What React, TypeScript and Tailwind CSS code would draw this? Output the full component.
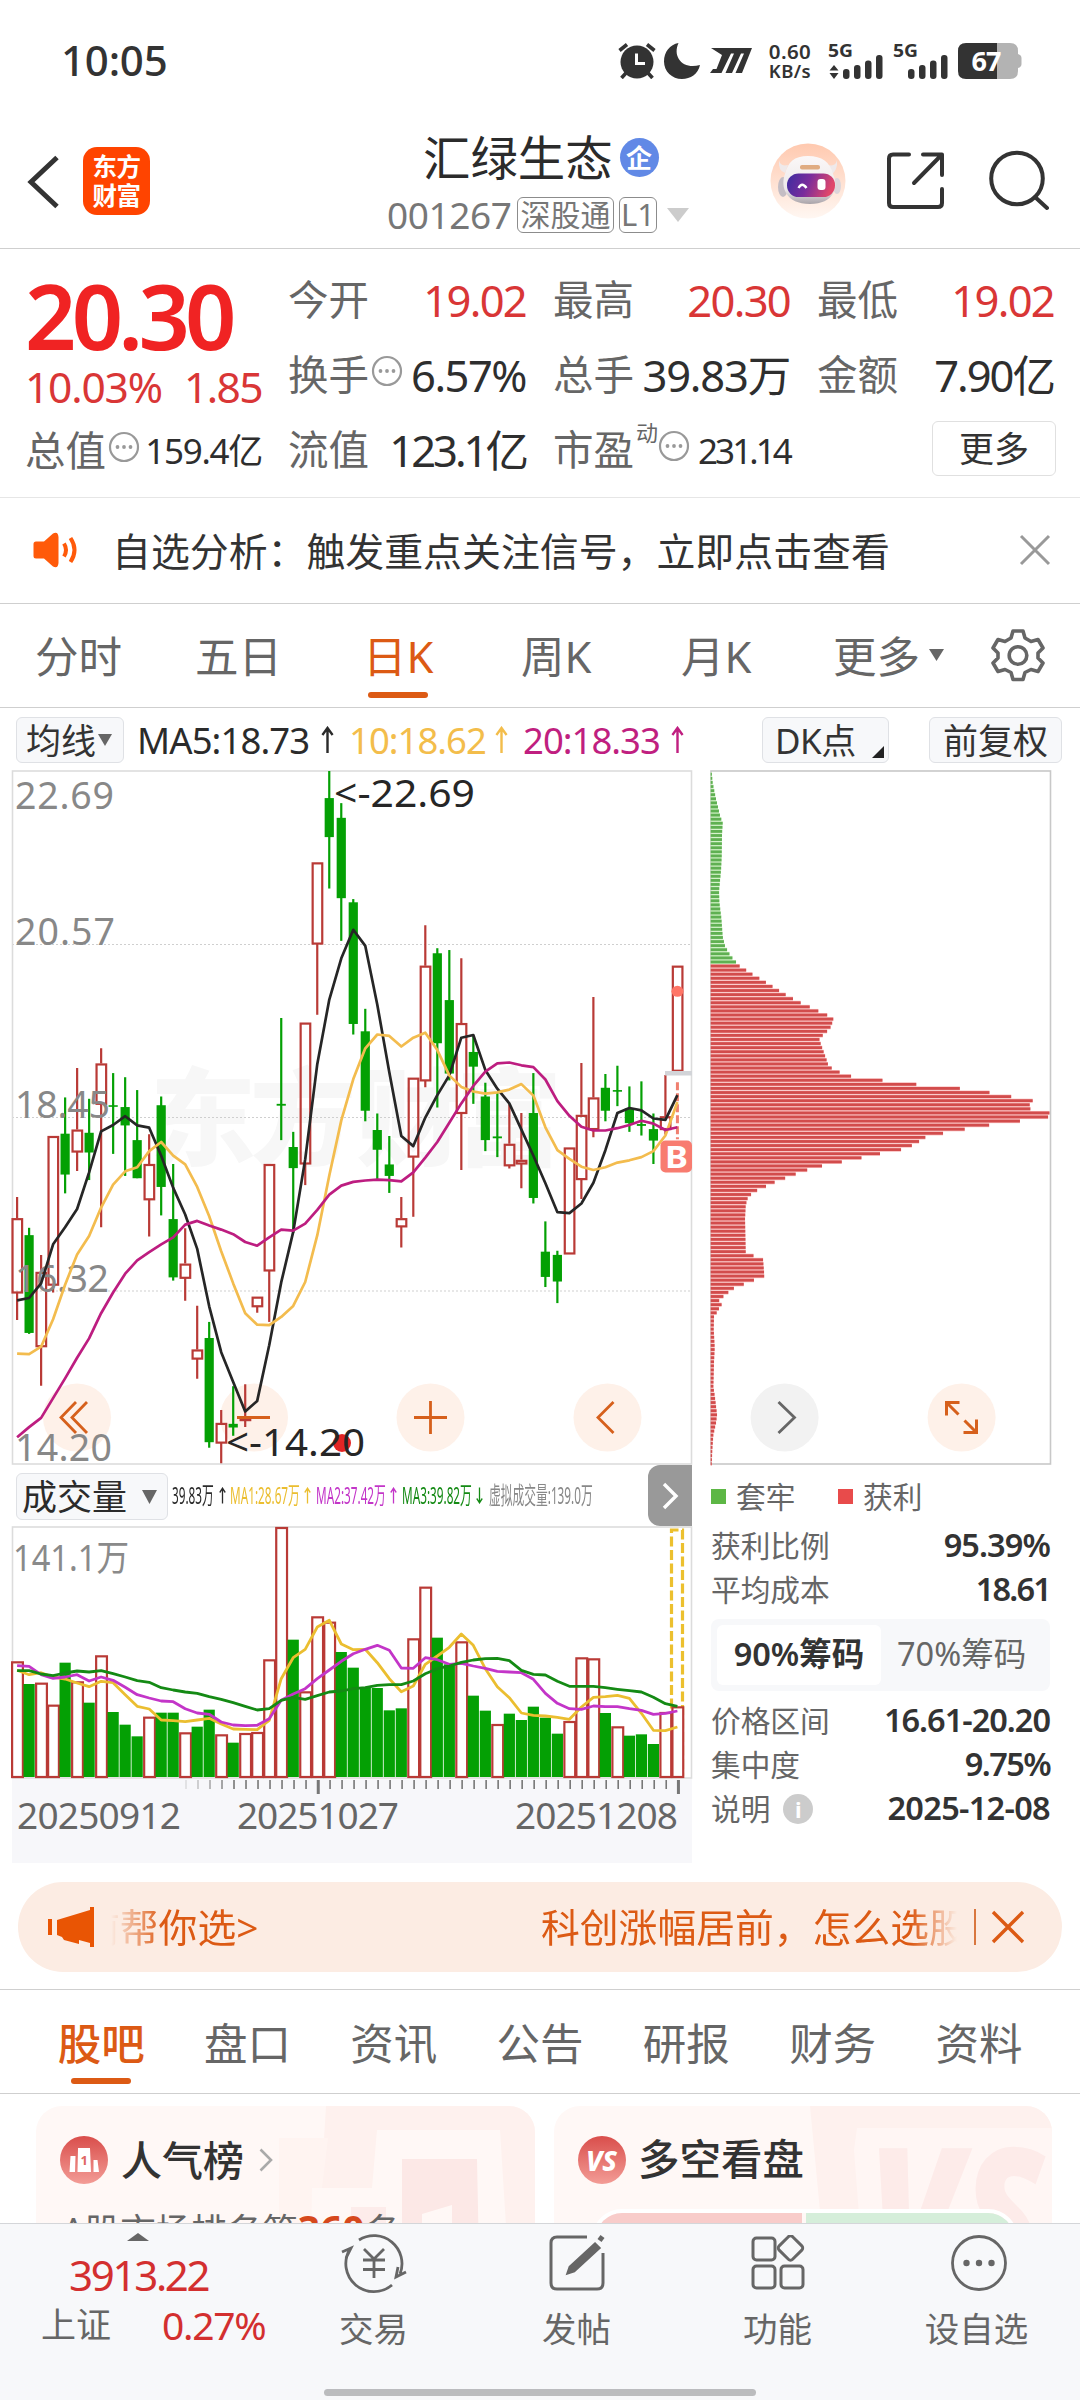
import React from "react";

/* ------------------------------------------------------------------ */
/* Chart data (vertical values are in plot units, see yPrice / yVol)   */
/* ------------------------------------------------------------------ */

type Candle = [kind: "r" | "g", top: number, bottom: number, high: number, low: number];

const candles: Candle[] = [
  ["r", 998, 1161, 952, 1220], ["g", 1035, 1248, 1019, 1250], ["r", 1115, 1278, 1078, 1363], ["r", 819, 1144, 819, 1160],
  ["g", 814, 903, 735, 944], ["r", 805, 854, 671, 895], ["g", 812, 855, 738, 915], ["r", 661, 750, 628, 1018],
  ["g", 752, 755, 682, 858], ["g", 756, 796, 691, 906], ["g", 828, 911, 719, 911], ["r", 880, 958, 815, 1038],
  ["g", 752, 930, 733, 992], ["g", 1000, 1127, 880, 1134], ["r", 1097, 1129, 1020, 1178], ["r", 1284, 1305, 1189, 1348],
  ["g", 1259, 1486, 1224, 1498], ["r", 1444, 1488, 1416, 1532], ["g", 1446, 1454, 1364, 1472], ["r", 1434, 1439, 1360, 1453],
  ["r", 1169, 1191, 1169, 1204], ["r", 880, 1113, 880, 1224], ["g", 749, 753, 562, 828], ["g", 843, 889, 810, 1030],
  ["r", 572, 880, 572, 926], ["r", 223, 401, 223, 555], ["g", 83, 168, 24, 280], ["g", 126, 301, 94, 394],
  ["g", 310, 575, 303, 598], ["g", 591, 764, 542, 787], ["g", 806, 849, 770, 913], ["g", 881, 906, 819, 943],
  ["r", 998, 1017, 952, 1062], ["r", 692, 865, 692, 995], ["r", 448, 699, 360, 713], ["g", 421, 617, 410, 757],
  ["g", 523, 683, 414, 698], ["r", 573, 770, 432, 893], ["g", 636, 668, 602, 749], ["g", 733, 828, 703, 852],
  ["g", 820, 824, 725, 865], ["r", 836, 884, 750, 890], ["r", 871, 880, 769, 933], ["g", 769, 954, 682, 966],
  ["g", 1071, 1126, 1005, 1148], ["g", 1078, 1136, 1069, 1183], ["r", 844, 1076, 844, 1076], ["r", 773, 914, 660, 956],
  ["r", 735, 805, 516, 822], ["g", 714, 764, 684, 787], ["g", 719, 722, 666, 754], ["g", 759, 791, 711, 810],
  ["g", 793, 797, 700, 818], ["g", 804, 829, 770, 880], ["r", 776, 805, 686, 816], ["r", 448, 678, 448, 678],
];

const ma5 = [1177, 1172, 1140, 1055, 1018, 978, 898, 809, 795, 776, 796, 801, 862, 932, 990, 1065, 1190, 1290, 1355, 1419, 1396, 1275, 1138, 1028, 870, 662, 522, 432, 370, 405, 533, 680, 819, 841, 779, 730, 687, 605, 599, 675, 716, 748, 805, 862, 922, 985, 987, 966, 921, 850, 769, 758, 763, 781, 784, 730];
const ma10 = [1293, 1294, 1278, 1218, 1143, 1077, 1037, 975, 925, 896, 887, 852, 832, 862, 881, 930, 994, 1070, 1140, 1205, 1230, 1231, 1213, 1189, 1137, 1035, 905, 785, 695, 628, 598, 601, 624, 605, 594, 632, 687, 712, 722, 727, 724, 718, 706, 731, 800, 850, 869, 886, 893, 887, 877, 872, 865, 852, 818, 745];
const ma20 = [1475, 1453, 1433, 1390, 1347, 1302, 1260, 1205, 1160, 1119, 1090, 1072, 1055, 1040, 1012, 1004, 1014, 1023, 1033, 1050, 1058, 1040, 1023, 1025, 1010, 980, 947, 927, 919, 916, 914, 915, 918, 898, 866, 832, 790, 748, 710, 679, 661, 659, 665, 669, 696, 743, 775, 799, 807, 807, 802, 795, 786, 792, 806, 800];

const volumes: ["r" | "g", number][] = [
  ["r", 608], ["g", 676], ["r", 672], ["r", 738], ["g", 612], ["r", 668], ["g", 732], ["r", 590], ["g", 760], ["g", 798],
  ["g", 833], ["r", 774], ["g", 762], ["g", 762], ["r", 821], ["g", 804], ["g", 753], ["r", 827], ["g", 852], ["r", 823],
  ["r", 820], ["r", 602], ["r", 205], ["g", 543], ["r", 698], ["r", 473], ["r", 489], ["g", 580], ["g", 627], ["g", 686],
  ["g", 688], ["g", 755], ["g", 749], ["r", 539], ["r", 384], ["g", 537], ["g", 617], ["r", 548], ["g", 711], ["g", 756],
  ["r", 796], ["g", 765], ["g", 784], ["g", 744], ["g", 777], ["g", 825], ["r", 787], ["r", 596], ["r", 599], ["g", 763],
  ["r", 803], ["g", 831], ["g", 827], ["g", 856], ["r", 760], ["r", 743],
];
const vma1 = [635, 648, 642, 655, 661, 673, 684, 668, 672, 708, 743, 751, 784, 786, 789, 784, 779, 796, 811, 812, 813, 785, 660, 597, 572, 505, 485, 556, 573, 572, 612, 660, 699, 682, 617, 592, 566, 526, 560, 630, 684, 717, 763, 770, 772, 776, 782, 745, 716, 714, 710, 719, 764, 815, 816, 805];
const vma2 = [621, 623, 648, 659, 655, 648, 667, 655, 665, 686, 708, 718, 727, 729, 750, 763, 767, 790, 799, 801, 800, 780, 725, 706, 690, 660, 634, 608, 585, 572, 560, 575, 628, 629, 597, 603, 617, 614, 622, 629, 638, 640, 642, 662, 704, 734, 750, 752, 742, 744, 744, 750, 755, 767, 764, 757];
const vma3 = [636, 636, 646, 651, 643, 637, 640, 636, 645, 655, 666, 671, 687, 694, 700, 704, 714, 722, 732, 743, 754, 750, 725, 716, 722, 711, 700, 697, 690, 687, 680, 678, 678, 667, 645, 630, 622, 611, 604, 600, 599, 606, 635, 647, 649, 668, 683, 683, 683, 687, 692, 696, 700, 716, 735, 743];

/* Cost distribution outline: [vertical unit, bar end] */
const chips: [number, number][] = [
  [28, 65], [50, 68], [68, 73], [85, 78], [103, 84], [121, 90], [138, 98], [160, 96], [210, 95], [240, 93], [285, 87],
  [310, 88], [345, 94], [385, 98], [405, 105], [420, 116], [431, 127], [440, 138], [449, 149], [458, 169], [467, 188],
  [476, 209], [485, 229], [494, 249], [503, 269], [512, 289], [520, 309], [530, 335], [538, 360], [547, 386], [556, 413],
  [565, 431], [574, 426], [583, 421], [592, 410], [600, 398], [609, 388], [618, 392], [636, 401], [654, 410], [663, 414],
  [671, 425], [680, 449], [689, 484], [698, 581], [707, 684], [716, 818], [724, 896], [733, 962], [742, 1028], [751, 1019],
  [760, 1021], [769, 1080], [777, 1080], [786, 995], [796, 891], [804, 826], [813, 760], [822, 706], [831, 687], [840, 665],
  [849, 632], [858, 567], [867, 511], [876, 451], [885, 391], [893, 352], [902, 317], [911, 285], [920, 253], [929, 227],
  [938, 200], [947, 182], [956, 172], [970, 167], [1000, 165], [1071, 167], [1080, 191], [1088, 219], [1124, 223],
  [1133, 192], [1142, 161], [1151, 131], [1159, 116], [1168, 101], [1177, 87], [1186, 95], [1195, 87], [1204, 80],
  [1212, 72], [1240, 71], [1280, 74], [1310, 72], [1365, 70], [1390, 75], [1408, 78], [1426, 81], [1444, 78], [1470, 70],
  [1500, 67], [1535, 65],
];

const xAt = (i: number) => 17.1 + 12.006 * i;
const yPrice = (v: number) => 1 + (v - 24) * 0.4591;
const yVol = (v: number) => (v - 205) / 3 + 1;

const line = (values: number[], y: (v: number) => number) =>
  values.map((v, i) => `${xAt(i).toFixed(1)},${y(v).toFixed(1)}`).join(" ");

const chipEnd = (v: number) => {
  for (let i = 1; i < chips.length; i++) {
    const [y1, x1] = chips[i];
    if (v <= y1) {
      const [y0, x0] = chips[i - 1];
      return x0 + ((x1 - x0) * (v - y0)) / (y1 - y0);
    }
  }
  return 65;
};

/* ------------------------------------------------------------------ */
/* Small pieces                                                        */
/* ------------------------------------------------------------------ */

function Dots({ className = "" }: { className?: string }) {
  return (
    <svg viewBox="0 0 32 32" className={`h-8 w-8 shrink-0 ${className}`}>
      <circle cx="16" cy="16" r="14" fill="none" stroke="#999" strokeWidth="2.200" />
      <circle cx="9.5" cy="16" r="1.9" fill="#999" />
      <circle cx="16" cy="16" r="1.9" fill="#999" />
      <circle cx="22.5" cy="16" r="1.9" fill="#999" />
    </svg>
  );
}

function Squeezed({ box, color, children }: { box: string; color: string; children: React.ReactNode }) {
  return (
    <span className={`block shrink-0 ${box}`}>
      <span className={`block w-max origin-left scale-x-[0.5] text-[23.5px] leading-none ${color}`}>{children}</span>
    </span>
  );
}

function Arrow({ className, down = false }: { className: string; down?: boolean }) {
  return (
    <svg viewBox="0 0 14 28" preserveAspectRatio="none" className={`shrink-0 ${className}`} fill="none" stroke="currentColor" strokeWidth="2.6">
      <path d={down ? "M7 1V26M1.5 19L7 26L12.5 19" : "M7 27V2M1.5 9L7 2L12.5 9"} />
    </svg>
  );
}

function Signal({ data = false }: { data?: boolean }) {
  return (
    <svg viewBox="0 0 54 36" className="h-9 w-[54px] overflow-visible" fill="#333">
      <text x="-1" y="13.5" fontSize="18.5" fontWeight="700" textLength="25" lengthAdjust="spacingAndGlyphs">5G</text>
      {data && <path d="M5 22l4.5 5.5h-9zM5 36l4.5-6h-9z" />}
      <rect x="14" y="26" width="6.5" height="10" rx="3" />
      <rect x="25" y="22" width="6.5" height="14" rx="3" />
      <rect x="36" y="17.5" width="6.5" height="18.5" rx="3" />
      <rect x="47" y="12" width="6.5" height="24" rx="3" />
    </svg>
  );
}

/* ------------------------------------------------------------------ */
/* Sections                                                            */
/* ------------------------------------------------------------------ */

function StatusBar() {
  return (
    <div className="flex h-[122px] items-center pl-[61px]">
      <div className="mt-[-2px] w-[557px] text-[42px] leading-none font-medium tracking-[-0.2px] text-[#333]">10:05</div>
      <svg viewBox="0 0 38 37" className="h-[37px] w-[38px]">
        <circle cx="19" cy="20" r="16.5" fill="#333" />
        <path d="M1.5 8.5L9 2.5M36.500 8.500L29 2.500M8 31L3.500 36M30 31L34.500 36" stroke="#333" strokeWidth="3.6" />
        <path d="M18.500 11.500V21.500H27" fill="none" stroke="#fff" strokeWidth="3" />
      </svg>
      <svg viewBox="0 0 36 36" className="ml-2 h-9 w-9">
        <path d="M14.500 0C8 14 19 27 36 22C34 31 26.500 36 18 36C8 36 0 28.500 0 18.500C0 9 6 1.500 14.500 0Z" fill="#333" />
      </svg>
      <svg viewBox="0 0 42 25" className="ml-[10px] h-[25px] w-[42px]">
        <path d="M1 0H42L32 25H25.500L34 5.500H31L22 25H15.500L24 5.500H21L11.500 25H0L3 21H6.500L12 7Z" fill="#333" />
      </svg>
      <div className="ml-[15px] flex w-[46px] flex-col items-center text-[20.5px] leading-[20px] font-semibold tracking-[0.4px] text-[#333]">
        <span>0.60</span>
        <span className="text-[18.5px]">KB/s</span>
      </div>
      <div className="ml-4"><Signal data /></div>
      <div className="ml-[11px]"><Signal /></div>
      <svg viewBox="0 0 64 36" className="ml-2.5 h-9 w-16">
        <path d="M39 0H52Q60 0 60 8V11Q63.500 12 63.500 15V21Q63.500 24 60 25V28Q60 36 52 36H39Z" fill="#b3b3b3" />
        <path d="M8 0H39V36H8Q0 36 0 28V8Q0 0 8 0Z" fill="#333" />
        <text x="13.500" y="27.500" fontSize="27" fontWeight="700" fill="#fff" textLength="30">67</text>
      </svg>
    </div>
  );
}

function Robot() {
  return (
    <svg viewBox="0 0 76 76" className="h-[76px] w-[76px]">
      <defs>
        <linearGradient id="halo" x1="0" y1="0" x2="0" y2="1">
          <stop offset="0" stopColor="#ffc9af" />
          <stop offset="1" stopColor="#fff7f2" />
        </linearGradient>
        <linearGradient id="visor" x1="0" y1="0" x2="1" y2="0.2">
          <stop offset="0" stopColor="#3c2ca0" />
          <stop offset="0.5" stopColor="#7a2c9c" />
          <stop offset="1" stopColor="#e0476b" />
        </linearGradient>
        <linearGradient id="shell" x1="0" y1="0" x2="0" y2="1">
          <stop offset="0" stopColor="#fbf8f8" />
          <stop offset="0.7" stopColor="#ece8ea" />
          <stop offset="1" stopColor="#a9a3a9" />
        </linearGradient>
      </defs>
      <circle cx="38" cy="38" r="37.500" fill="url(#halo)" />
      <path d="M9 17Q10 24 18 22L15 30Q8 28 9 17ZM67 17Q66 24 58 22L61 32Q68 27 67 17Z" fill="#efe9ea" />
      <ellipse cx="13" cy="44" rx="5" ry="10" fill="#c4bdc4" />
      <ellipse cx="67" cy="43" rx="4" ry="8" fill="#dcd5da" />
      <path d="M38 13C52 13 60 19 63 31C69 44 64 61 40 61C16 61 10 44 15 31C18 19 24 13 38 13Z" fill="url(#shell)" />
      <rect x="30" y="22" width="20" height="4.500" rx="2" fill="#e0ac82" />
      <rect x="17" y="30.500" width="48" height="23.500" rx="11.500" fill="url(#visor)" />
      <path d="M28.500 45Q32 38.500 36.500 45" fill="none" stroke="#fff" strokeWidth="2.400" />
      <rect x="47.500" y="36" width="8" height="11" rx="3" fill="#fff" />
    </svg>
  );
}

function Header() {
  return (
    <div className="flex h-[127px] border-b border-[#cfcfcf]">
      <svg viewBox="0 0 34 54" className="mt-[33px] ml-[27px] h-[54px] w-[34px]">
        <path d="M30 2.500L4 27L30 51.500" fill="none" stroke="#333" strokeWidth="5" />
      </svg>
      <div className="mt-[25px] ml-[22px] flex h-[68px] w-[67px] flex-col items-center justify-center rounded-[14px] bg-[#ff4400] text-[24.5px] leading-[29px] font-bold tracking-[-0.5px] text-white">
        <span>东方</span>
        <span>财富</span>
      </div>
      <div className="ml-[235px] flex w-[310px] flex-col">
        <div className="mt-2 flex h-[56px] items-center pl-[38px]">
          <span className="text-[47.4px] leading-none text-[#2b2b2b]">汇绿生态</span>
          <span className="ml-[7px] flex h-[39px] w-[39px] items-center justify-center rounded-full bg-[#6189e6] text-[26px] leading-none font-bold text-white">企</span>
        </div>
        <div className="mt-[10px] flex h-[38px] items-center text-[#777]">
          <span className="w-[132px] pl-0.5 text-[37px] leading-none tracking-[-0.4px]">001267</span>
          <span className="flex h-9 w-[97px] items-center justify-center rounded-md border-[1.5px] border-[#8c8c8c] text-[30px] leading-none">深股通</span>
          <span className="ml-[5px] flex h-9 w-[38px] items-center justify-center rounded-md border-[1.5px] border-[#8c8c8c] text-[31px] leading-none">L1</span>
          <svg viewBox="0 0 22 14" className="ml-2.5 h-[14px] w-[22px]"><path d="M0 0H22L11 14Z" fill="#ccc" /></svg>
        </div>
      </div>
      <div className="mt-[21px] ml-[75px]"><Robot /></div>
      <svg viewBox="0 0 60 60" className="mt-[29px] ml-10 h-[60px] w-[60px]" fill="none" stroke="#333" strokeWidth="4">
        <path d="M23 3.500H7Q3 3.500 3 7.500V52Q3 56 7 56H52Q56 56 56 52V38M37 3.500H56V24M55 4.500L28 32" strokeLinecap="round" strokeLinejoin="round" />
      </svg>
      <svg viewBox="0 0 60 62" className="mt-[28px] ml-[43px] h-[62px] w-[60px]" fill="none" stroke="#333" strokeWidth="4" strokeLinecap="round">
        <circle cx="28" cy="28.500" r="25.800" />
        <path d="M46 47L58 58" />
      </svg>
    </div>
  );
}

function Quote() {
  const label = "text-[40.5px] leading-none text-[#666] shrink-0";
  const red = "text-[43.5px] leading-none tracking-[-1.7px] text-[#d93636]";
  const dark = "text-[43.5px] leading-none text-[#2e2e2e]";
  const small = "text-[35px] leading-none text-[#2e2e2e]";
  const col = "flex items-center justify-between";
  return (
    <div className="flex h-[249px] border-b border-[#e6e6e6] pl-[25px]">
      <div className="w-[237px]">
        <div className="mt-[18px] flex h-[96px] items-center text-[90px] leading-none font-semibold tracking-[-4.8px] text-[#f02323]">20.30</div>
        <div className="mt-px flex h-[46px] items-center justify-between text-[42.5px] leading-none text-[#d93636]">
          <span className="tracking-[-1.2px]">10.03%</span>
          <span className="tracking-[-1.6px]">1.85</span>
        </div>
        <div className="mt-[16px] flex h-[50px] items-center">
          <span className={label}>总值</span>
          <Dots className="mb-2 ml-[2px]" />
          <span className={`${small} ml-auto tracking-[-1.3px]`}>159.4亿</span>
        </div>
      </div>
      <div className="mt-[14px] ml-[26px] grid w-[766px] auto-rows-[75px] grid-cols-[238px_237px_237px] gap-x-[27px]">
        <div className={col}><span className={label}>今开</span><span className={red}>19.02</span></div>
        <div className={col}><span className={label}>最高</span><span className={`${red} tracking-[-0.4px]`}>20.30</span></div>
        <div className={col}><span className={label}>最低</span><span className={red}>19.02</span></div>
        <div className={col}>
          <span className={label}>换手</span><Dots className="mb-2 ml-[2px]" /><span className={`${dark} ml-auto tracking-[-1.5px]`}>6.57%</span>
        </div>
        <div className={col}><span className={label}>总手</span><span className={`${dark} tracking-[-1.2px]`}>39.83万</span></div>
        <div className={col}><span className={label}>金额</span><span className={`${dark} tracking-[-2px]`}>7.90亿</span></div>
        <div className={col}><span className={label}>流值</span><span className={`${dark} tracking-[-3px]`}>123.1亿</span></div>
        <div className={col}>
          <span className={label}>市盈</span>
          <span className="mb-9 ml-0.5 text-[22px] leading-none text-[#666]">动</span>
          <Dots className="mb-2" />
          <span className={`${small} ml-auto tracking-[-2.9px]`}>231.14</span>
        </div>
        <div className="flex items-center justify-end">
          <span className="mr-[-2px] mb-1 flex h-[55px] w-[124px] items-center justify-center rounded-md border-[1.5px] border-[#e0e0e0] text-[35px] leading-none text-[#333]">更多</span>
        </div>
      </div>
    </div>
  );
}

function Alert() {
  return (
    <div className="flex h-[106px] items-center border-b border-[#cfcfcf] pl-[33px]">
      <svg viewBox="0 0 46 36" className="h-9 w-[46px]">
        <path d="M3 9.500H11L20 1.500Q25 -1 25.500 5V31Q25 37 20 34.500L11 26.500H3Q0.500 26.500 0.500 24V12Q0.500 9.500 3 9.500Z" fill="#ff5a0a" />
        <path d="M31 11.500Q35 18 31 24.500M37.500 6Q45.500 18 37.500 30" fill="none" stroke="#ff5a0a" strokeWidth="4" />
      </svg>
      <span className="mt-0.5 ml-[33px] w-[907px] text-[38.9px] leading-none text-[#333]">自选分析：触发重点关注信号，立即点击查看</span>
      <svg viewBox="0 0 32 32" className="h-8 w-8" stroke="#999" strokeWidth="3"><path d="M2 2L30 30M30 2L2 30" /></svg>
    </div>
  );
}

function PeriodTabs() {
  return (
    <div className="flex h-[104px] items-center border-b border-[#cfcfcf] pt-1 text-[43.5px] leading-none text-[#666]">
      <span className="ml-[35px] w-[160px]">分时</span>
      <span className="w-[168px]">五日</span>
      <span className="relative w-[158px] text-[#dc5a14]">
        日K
        <i className="absolute top-[57px] left-[5px] h-1.5 w-[60px] rounded-full bg-[#dc5a14]" />
      </span>
      <span className="w-[160px]">周K</span>
      <span className="w-[152px]">月K</span>
      <span>更多</span>
      <svg viewBox="0 0 15 12" className="mb-1 ml-[9px] h-3 w-[15px]"><path d="M0 0H15L7.500 12Z" fill="#666" /></svg>
      <svg viewBox="0 0 54 54" className="mb-1 ml-[47px] h-[54px] w-[54px]" fill="none" stroke="#666" strokeWidth="3.600" strokeLinejoin="round">
        <path d="M22 3H32L34 10L40 13.500L47 11.500L52 20L47 25V30L52 35L47 43.500L40 41.500L34 44.500L32 51.500H22L20 44.500L14 41.500L7 43.500L2 35L7 30V25L2 20L7 11.500L14 13.500L20 10Z" />
        <circle cx="27" cy="27.500" r="8.800" />
      </svg>
    </div>
  );
}

function MaRow() {
  const btn = "flex h-[46px] items-center rounded-md border-[1.5px] border-[#dfe1e5] bg-[#f7f8fa] text-[35px] leading-none text-[#333]";
  return (
    <div className="flex h-[63px] items-center pt-0.5 text-[36.5px] leading-none">
      <div className={`${btn} ml-4 w-[108px] pl-[9px]`}>
        均线
        <svg viewBox="0 0 14 12" className="ml-0.5 h-3 w-[14px]"><path d="M0 0H14L7 12Z" fill="#666" /></svg>
      </div>
      <span className="ml-[13px] w-[184px] tracking-[-0.9px] text-[#2b2b2b]">MA5:18.73</span>
      <Arrow className="h-7 w-[13px] text-[#2b2b2b]" />
      <span className="ml-[15px] w-[146px] tracking-[-1px] text-[#f3bd4b]">10:18.62</span>
      <Arrow className="h-7 w-[13px] text-[#f3bd4b]" />
      <span className="ml-[15px] w-[148px] tracking-[-1px] text-[#c01f80]">20:18.33</span>
      <Arrow className="h-7 w-[13px] text-[#c01f80]" />
      <div className={`${btn} relative ml-[78px] w-[127px] pl-[12px] tracking-[-0.5px]`}>
        DK点
        <svg viewBox="0 0 12 12" className="absolute right-1 bottom-1 h-3 w-3"><path d="M12 0V12H0Z" fill="#222" /></svg>
      </div>
      <div className={`${btn} ml-[40px] w-[133px] justify-center`}>前复权</div>
    </div>
  );
}

function PriceChart() {
  const red = "#b93a36";
  const green = "#04a004";
  const last = candles.length - 1;
  return (
    <svg viewBox="0 0 700 696" className="h-[696px] w-[700px] shrink-0">
      <g fill="#f7f7f7" fontSize="106" fontWeight="900">
        <text x="150" y="387">东</text>
        <text x="250" y="387">方</text>
        <text x="356" y="387">财</text>
        <text x="456" y="387">富</text>
      </g>
      <path d="M12 174.500H692M12 347.500H692M12 521H692" stroke="#cfcfcf" strokeWidth="1" strokeDasharray="2 2" />
      <rect x="12.500" y="1" width="679" height="693" fill="none" stroke="#dcdcdc" strokeWidth="1.600" />
      <g fill="#fef1e9">
        <circle cx="77" cy="647.500" r="34" />
        <circle cx="254" cy="647.500" r="34" />
        <circle cx="430.500" cy="647.500" r="34" />
        <circle cx="607.500" cy="647.500" r="34" />
      </g>
      {candles.map(([kind, top, bottom, high, low], i) => {
        const x = xAt(i);
        const t = yPrice(top);
        const b = yPrice(bottom);
        if (kind === "g") {
          return (
            <g key={i} fill={green}>
              <rect x={x - 1.1} y={yPrice(high)} width="2.200" height={yPrice(low) - yPrice(high)} />
              <rect x={x - 4.6} y={t} width="9.200" height={Math.max(1.6, b - t)} />
            </g>
          );
        }
        return (
          <g key={i} stroke={red} strokeWidth="2.200" fill="none">
            <path d={`M${x} ${yPrice(high)}V${t}M${x} ${b}V${yPrice(low)}`} />
            <rect x={x - 4.6} y={t + 1} width="9.600" height={Math.max(0.5, b - t - 1.5)} />
          </g>
        );
      })}
      <rect x="665" y="301" width="27" height="4.500" fill="#d2d4d8" />
      <ellipse cx={xAt(last)} cy={yPrice(504)} rx="6" ry="5.500" fill="#ff7566" />
      <path d={`M${xAt(last)} ${yPrice(702)}V${yPrice(826)}`} stroke="#f08070" strokeWidth="3" strokeDasharray="8 3" />
      <g fill="#888" fontSize="37.500">
        <text x="15" y="39" textLength="99">22.69</text>
        <text x="15" y="174.500" textLength="100">20.57</text>
        <text x="15" y="348" textLength="95">18.45</text>
        <text x="15" y="522" textLength="94">16.32</text>
        <text x="15" y="691" textLength="97">14.20</text>
      </g>
      <g fill="none" strokeWidth="2.700" strokeLinejoin="round">
        <polyline points={line(ma5, yPrice)} stroke="#262626" />
        <polyline points={line(ma10, yPrice)} stroke="#f3bc4e" />
        <polyline points={line(ma20, yPrice)} stroke="#bd1d80" />
      </g>
      <rect x="660.500" y="370.500" width="31.500" height="32" rx="5" fill="#f87c70" />
      <text x="665" y="397.500" fontSize="30" fontWeight="700" fill="#fff" textLength="23" lengthAdjust="spacingAndGlyphs">B</text>
      <ellipse cx="342" cy="673" rx="9" ry="9" fill="#e32525" />
      <g fill="#262626" fontSize="37.500">
        <text x="334" y="37" textLength="141" lengthAdjust="spacingAndGlyphs">&lt;-22.69</text>
        <text x="226" y="686" textLength="139" lengthAdjust="spacingAndGlyphs">&lt;-14.20</text>
      </g>
      <g fill="none" stroke="#d6601c" strokeWidth="2.800">
        <path d="M76 632L61 647.500L76 663M87 632L72 647.500L87 663" />
        <path d="M237 647.500H270" />
        <path d="M414 647.500H447M430.500 631V664" />
        <path d="M613.500 632L598 647.500L613.500 663" />
      </g>
    </svg>
  );
}

function ChipChart() {
  const rows = Array.from({ length: 170 }, (_, k) => 31.2 + 8.886 * k);
  return (
    <svg viewBox="700 0 380 696" className="h-[696px] w-[380px] shrink-0">
      <rect x="711" y="1" width="339.500" height="693" fill="#fff" stroke="#c8c8c8" strokeWidth="1.600" />
      {rows.map((v, k) => {
        const w = (chipEnd(v) - 62) / 3;
        const y = yPrice(v);
        return (
          <g key={k}>
            <rect x="710.700" y={y - 2} width={w} height="4.080" fill={k < 47 ? "#c9efbd" : "#f9bcbc"} />
            <rect x="710.700" y={y - 1.4} width={w} height="2.800" fill={k < 47 ? "#5fb052" : "#d24c4c"} />
          </g>
        );
      })}
      <circle cx="784.600" cy="647.500" r="34" fill="#f2f2f2" />
      <path d="M778.500 632L794.500 647.500L778.500 663" fill="none" stroke="#666" strokeWidth="2.800" />
      <circle cx="961.600" cy="647.500" r="34" fill="#fef1e9" />
      <path d="M959.500 632.500H946.500V645.500M946.500 632.500L958.500 644.500M963.500 662.500H976.500V649.500M976.500 662.500L964.500 650.500" fill="none" stroke="#d6601c" strokeWidth="3" />
    </svg>
  );
}

function VolumeChart() {
  const red = "#b93a36";
  const base = yVol(955);
  return (
    <svg viewBox="0 0 700 337" className="h-[337px] w-[700px]">
      <rect x="12" y="253" width="680" height="84" fill="#f7f7fa" />
      <rect x="12.500" y="1" width="679" height="251" fill="none" stroke="#dcdcdc" strokeWidth="1.600" />
      <text x="13" y="45" fontSize="36.500" fill="#8a8a8a" textLength="116" lengthAdjust="spacingAndGlyphs">141.1万</text>
      <path d="M671.500 250V4H682.500V250" fill="none" stroke="#ecc02e" strokeWidth="3.200" strokeDasharray="10 3.500" />
      {volumes.map(([kind, top], i) => {
        const x = xAt(i);
        const t = yVol(top);
        return kind === "g" ? (
          <rect key={i} x={x - 5.6} y={t} width="11.200" height={base - t} fill="#04a004" />
        ) : (
          <rect key={i} x={x - 5} y={t + 1} width="10.800" height={base - t - 1} fill="#fff" stroke={red} strokeWidth="2.200" />
        );
      })}
      <g fill="none" strokeWidth="2.800" strokeLinejoin="round">
        <polyline points={line(vma1, yVol)} stroke="#ebbe30" />
        <polyline points={line(vma2, yVol)} stroke="#c335c8" />
        <polyline points={line(vma3, yVol)} stroke="#148a14" />
      </g>
      {volumes.map((_, i) => {
        if (i < 14) return null;
        const major = i === 25 || i === volumes.length - 1;
        return (
          <rect
            key={i}
            x={xAt(i) - (major ? 0.5 : 0)}
            y="254"
            width={major ? 3 : 1.6}
            height={major ? 14 : 9}
            fill="#777"
            opacity={Math.min(1, 0.2 + (i - 14) * 0.2)}
          />
        );
      })}
      <g fill="#666" fontSize="37">
        <text x="17" y="303" textLength="164">20250912</text>
        <text x="237" y="303" textLength="162">20251027</text>
        <text x="515" y="303" textLength="163">20251208</text>
      </g>
    </svg>
  );
}

function VolumeHeader() {
  return (
    <div className="flex h-[60px] items-center pl-4">
      <div className="mt-0.5 flex h-[47px] w-[152px] items-center rounded-md border-[1.5px] border-[#dfe1e5] bg-[#f7f8fa] pl-[5px] text-[35px] leading-none text-[#2b2b2b]">
        成交量
        <svg viewBox="0 0 15 14" className="ml-[15px] h-[14px] w-[15px]"><path d="M0 0H15L7.500 14Z" fill="#666" /></svg>
      </div>
      <Squeezed box="ml-1 w-[47px]" color="text-[#2b2b2b]">39.83万</Squeezed>
      <Arrow className="h-[17px] w-[7px] text-[#2b2b2b]" />
      <Squeezed box="ml-[4px] w-[74px]" color="text-[#ebbe30]">MA1:28.67万</Squeezed>
      <Arrow className="h-[17px] w-[7px] text-[#ebbe30]" />
      <Squeezed box="ml-[5px] w-[74px]" color="text-[#c335c8]">MA2:37.42万</Squeezed>
      <Arrow className="h-[17px] w-[7px] text-[#c335c8]" />
      <Squeezed box="ml-[5px] w-[74px]" color="text-[#148a14]">MA3:39.82万</Squeezed>
      <Arrow down className="h-[17px] w-[7px] text-[#148a14]" />
      <Squeezed box="ml-[6px] w-[110px]" color="text-[#888]">虚拟成交量:139.0万</Squeezed>
      <div className="ml-auto flex h-[61px] w-[44px] items-center justify-center rounded-l-xl bg-[#999]">
        <svg viewBox="0 0 18 28" className="h-7 w-[18px]" fill="none" stroke="#fff" strokeWidth="3.400"><path d="M3 2L15 14L3 26" /></svg>
      </div>
    </div>
  );
}

function Stat({ name, value, spacing, info = false }: { name: string; value: string; spacing: string; info?: boolean }) {
  return (
    <div className="flex h-11 items-center justify-between text-[29.7px] leading-none">
      <span className="flex items-center text-[#666]">
        {name}
        {info && (
          <i className="ml-[13px] flex h-[30px] w-[30px] items-center justify-center rounded-full bg-[#ccc] text-[22px] leading-none font-bold text-white not-italic">i</i>
        )}
      </span>
      <span className={`text-[32.5px] font-semibold text-[#333] ${spacing}`}>{value}</span>
    </div>
  );
}

function ChipStats() {
  return (
    <div className="w-[339px]">
      <div className="flex h-[58px] items-center pt-1 text-[29.7px] leading-none text-[#666]">
        <i className="h-[15px] w-[15px] bg-[#5db745]" />
        <span className="ml-2.5 w-[102px]">套牢</span>
        <i className="h-[15px] w-[15px] bg-[#e84b4b]" />
        <span className="ml-2.5">获利</span>
      </div>
      <Stat name="获利比例" value="95.39%" spacing="tracking-[-0.9px]" />
      <Stat name="平均成本" value="18.61" spacing="tracking-[-1.8px]" />
      <div className="mt-[7px] mb-[8px] flex h-[72px] items-center rounded-lg bg-[#f7f8fa] p-1.5 text-[32.5px] leading-none">
        <span className="flex h-[60px] w-[164px] items-center justify-center rounded-md bg-white font-semibold text-[#333]">90%筹码</span>
        <span className="ml-[16px] text-[#666]">70%筹码</span>
      </div>
      <Stat name="价格区间" value="16.61-20.20" spacing="tracking-[-1px]" />
      <Stat name="集中度" value="9.75%" spacing="tracking-[-1.6px]" />
      <Stat name="说明" value="2025-12-08" spacing="tracking-[-0.7px]" info />
    </div>
  );
}

function Banner() {
  return (
    <div className="mx-[18px] mt-[18px] flex h-[90px] items-center rounded-full bg-[#fcece3] pl-[30px] text-[38.8px] leading-none text-[#dc5a14]">
      <svg viewBox="0 0 46 40" className="h-10 w-[46px]" fill="#e95504">
        <rect x="0" y="12" width="4" height="16" />
        <path d="M9 13L42 3V0H46V40H42V36L31 33V37L16 33L14 30L9 28Z" />
      </svg>
      <div className="relative ml-[17px] flex h-12 w-[846px] items-center overflow-hidden [mask-image:linear-gradient(to_right,transparent_0,#000_52px,#000_800px,transparent_846px)]">
        <span className="-ml-[30px] w-[178px] shrink-0">前帮你选&gt;</span>
        <span className="ml-[282px] shrink-0">科创涨幅居前，怎么选股</span>
      </div>
      <i className="ml-[17px] h-9 w-[2px] bg-[#d9773f]" />
      <svg viewBox="0 0 34 34" className="ml-[15px] h-[34px] w-[34px]" stroke="#dc5a14" strokeWidth="3.400"><path d="M2 2L32 32M32 2L2 32" /></svg>
    </div>
  );
}

function SectionTabs() {
  const tabs = ["盘口", "资讯", "公告", "研报", "财务", "资料"];
  return (
    <div className="mt-[17px] flex h-[105px] items-center border-y border-[#cfcfcf] pt-[5px] pl-[28px] text-[43.5px] leading-none text-[#666]">
      <span className="relative flex w-[146.3px] shrink-0 justify-center font-medium text-[#dc5a14]">
        股吧
        <i className="absolute top-[56px] left-[43px] h-1.5 w-[60px] rounded-full bg-[#dc5a14]" />
      </span>
      {tabs.map((t) => (
        <span key={t} className="flex w-[146.3px] shrink-0 justify-center">{t}</span>
      ))}
    </div>
  );
}

function Cards() {
  return (
    <div className="flex h-[129px] gap-[19px] overflow-hidden pt-3 pl-9">
      <div className="relative h-[200px] w-[499px] shrink-0 overflow-hidden rounded-[26px] bg-[#fff8f6]">
        <svg viewBox="0 0 499 200" className="absolute inset-0 h-[200px] w-[499px]">
          <path d="M290 0H499V200H475L464 24H341L336 82H285Z" fill="#fef1ee" />
          <path d="M243 32H292L286 82H276L274 200H243Z" fill="#fff4f1" />
          <path d="M366 53H441L444 200H366Z" fill="#fce8e6" />
          <path d="M386 108L416 99V200H386Z" fill="#fff8f6" />
          <path d="M315 101H350V200H315Z" fill="#fdecea" />
        </svg>
        <div className="relative flex h-[60px] items-center pt-[48px] pl-6">
          <svg viewBox="0 0 48 48" className="h-12 w-12">
            <defs>
              <linearGradient id="rank" x1="0" y1="0" x2="0" y2="1">
                <stop offset="0" stopColor="#d94e4b" />
                <stop offset="1" stopColor="#f39c96" />
              </linearGradient>
            </defs>
            <circle cx="24" cy="24" r="24" fill="url(#rank)" />
            <path d="M10.500 20H15.500L15 36H9.500ZM18 12H30L31 36H17.500ZM33.500 24H37.500L39 36H33.500Z" fill="#fff" />
            <text x="20.500" y="29" fontSize="13" fontWeight="700" fill="#e06864">1</text>
          </svg>
          <span className="ml-[13px] text-[41px] leading-none font-medium text-[#333]">人气榜</span>
          <svg viewBox="0 0 14 24" className="ml-[15px] h-6 w-[14px]" fill="none" stroke="#aaa" strokeWidth="2.600"><path d="M1.500 1.500L12 12L1.500 22.500" /></svg>
        </div>
        <div className="relative mt-[43px] pl-[26px] text-[35.5px] leading-none whitespace-nowrap text-[#666]">
          A股市场排名第<b className="text-[39px] font-bold text-[#d6481c]">360</b>名
        </div>
      </div>
      <div className="relative h-[200px] w-[498px] shrink-0 overflow-hidden rounded-[26px] bg-[#fff8f6]">
        <svg viewBox="0 0 498 200" className="absolute inset-0 h-[200px] w-[498px]">
          <path d="M256 0H498V200H275Z" fill="#fef1ee" />
          <path d="M300 44L303 22H498V200H312Z" fill="#fff6f4" />
          <text x="314" y="178" fontSize="190" fontWeight="900" fontStyle="italic" fill="#fdebe9" textLength="176" lengthAdjust="spacingAndGlyphs">VS</text>
        </svg>
        <div className="relative flex h-[60px] items-center pt-[48px] pl-6">
          <svg viewBox="0 0 48 48" className="h-12 w-12">
            <circle cx="24" cy="24" r="24" fill="url(#rank)" />
            <text x="8" y="34.500" fontSize="29" fontWeight="800" fontStyle="italic" fill="#fff" textLength="31" lengthAdjust="spacingAndGlyphs">VS</text>
          </svg>
          <span className="ml-[12px] text-[41.5px] leading-none font-medium text-[#333]">多空看盘</span>
        </div>
        <div className="relative mt-[43px] ml-[38px] flex h-[60px] w-[426px] overflow-hidden rounded-full border-4 border-white">
          <i className="h-full w-[206px] bg-[#f8ccca]" />
          <i className="ml-1 h-full grow bg-[#d5eeda]" />
        </div>
      </div>
    </div>
  );
}

function BottomBar() {
  const item = "flex w-[201px] flex-col items-center";
  return (
    <div className="flex h-[177px] flex-col border-t-[1.5px] border-[#d4d6d9] bg-[#f7f8fa] text-[#666]">
      <div className="flex h-[165px] text-[34.5px]">
        <div className="w-[275px]">
          <svg viewBox="0 0 22 8" className="mt-[9px] ml-[127px] h-2 w-[22px]"><path d="M11 0L22 8H0Z" fill="#666" /></svg>
          <div className="mt-[13px] ml-[69px] text-[42px] leading-none tracking-[-2.3px] text-[#d32f2f]">3913.22</div>
          <div className="mt-[9px] ml-[41px] flex items-center leading-none">
            <span className="text-[35px]">上证</span>
            <span className="ml-[51px] text-[39px] tracking-[-1.3px] text-[#d32f2f]">0.27%</span>
          </div>
        </div>
        <div className={item}>
          <svg viewBox="0 0 66 62" className="mt-[8px] mr-1 h-[62px] w-[66px]" fill="none" stroke="#666" strokeWidth="2.800">
            <path d="M18 8A28 28 0 0 1 59 42M51 53A28 28 0 0 1 9 17M1 20L10 16L5 26M65 40L55 45L57 35" />
            <path d="M23 17L33 27L43 17M33 27V46M22 28H44M22 37.500H44" />
          </svg>
          <span className="mt-[18px] mr-1 leading-none">交易</span>
        </div>
        <div className={item}>
          <svg viewBox="0 0 58 58" className="mt-[10px] h-[58px] w-[58px]" fill="none" stroke="#666" strokeWidth="3">
            <path d="M39 3H9Q3 3 3 9V49Q3 55 9 55H49Q55 55 55 49V19" />
            <path d="M47 10L51 14L26 37L20 39L22 33Z" fill="#666" />
            <path d="M51 3L55 6" strokeWidth="5" />
          </svg>
          <span className="mt-[20px] leading-none">发帖</span>
        </div>
        <div className={item}>
          <svg viewBox="0 0 56 56" className="mt-[11px] h-14 w-14" fill="none" stroke="#666" strokeWidth="3">
            <rect x="3" y="3" width="22" height="22" rx="3.500" />
            <rect x="31" y="3.500" width="19" height="19" rx="3" transform="rotate(45 40.500 13)" />
            <rect x="3" y="31" width="22" height="22" rx="3.500" />
            <rect x="31" y="31" width="22" height="22" rx="3.500" />
          </svg>
          <span className="mt-[21px] leading-none">功能</span>
        </div>
        <div className={item}>
          <svg viewBox="0 0 58 58" className="mt-[10px] h-[58px] w-[58px]" fill="#666">
            <circle cx="29" cy="29" r="26.500" fill="none" stroke="#666" strokeWidth="2.800" />
            <circle cx="16.500" cy="29" r="3.200" />
            <circle cx="29" cy="29" r="3.200" />
            <circle cx="41.500" cy="29" r="3.200" />
          </svg>
          <span className="mt-[20px] mr-1 leading-none">设自选</span>
        </div>
      </div>
      <div className="mx-auto h-[7px] w-[432px] rounded-full bg-[#bbbcbe]" />
    </div>
  );
}

export default function App() {
  return (
    <div className="flex h-[2400px] w-[1080px] flex-col overflow-hidden bg-white font-['Noto_Sans','Noto_Sans_CJK_SC',sans-serif] whitespace-nowrap">
      <StatusBar />
      <Header />
      <Quote />
      <Alert />
      <PeriodTabs />
      <MaRow />
      <div className="-mt-px flex h-[696px]">
        <PriceChart />
        <ChipChart />
      </div>
      <div className="flex h-[399px]">
        <div className="w-[692px] shrink-0">
          <VolumeHeader />
          <VolumeChart />
        </div>
        <div className="ml-[19px] w-[340px]">
          <ChipStats />
        </div>
      </div>
      <Banner />
      <SectionTabs />
      <Cards />
      <BottomBar />
    </div>
  );
}
